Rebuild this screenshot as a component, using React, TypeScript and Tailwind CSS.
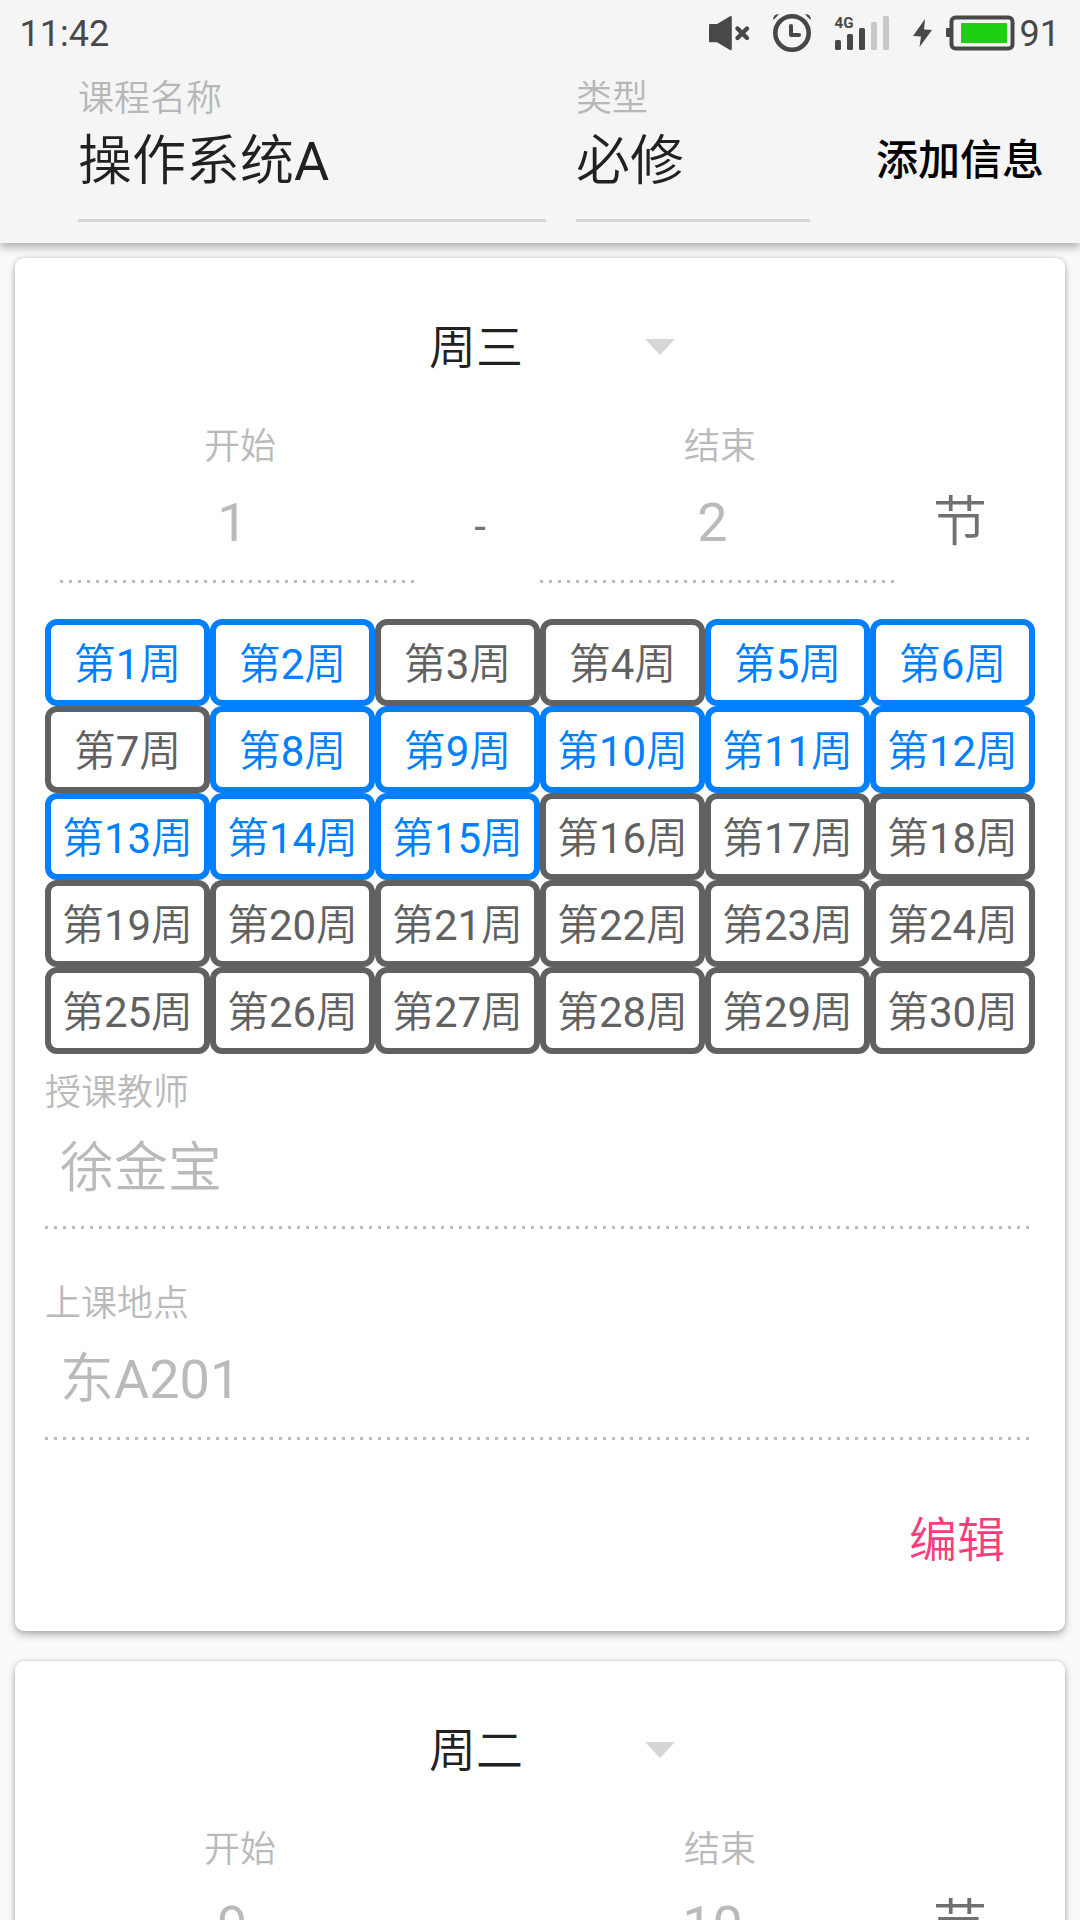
type Session = { day: string; start: string; end: string; weeks: number[]; teacher: string; place: string };

const sessions: Session[] = [
  { day: '周三', start: '1', end: '2', weeks: [1, 2, 5, 6, 8, 9, 10, 11, 12, 13, 14, 15], teacher: '徐金宝', place: '东A201' },
  { day: '周二', start: '9', end: '10', weeks: [1, 2, 5, 6, 8, 9, 10, 11, 12, 13, 14, 15], teacher: '徐金宝', place: '东A201' },
];

const allWeeks = Array.from({ length: 30 }, (_, i) => i + 1);

function StatusBar() {
  return (
    <div className="flex h-[68px] items-center pl-[19.500px] text-[36px] leading-[42px] text-[#484848]">
      <span>11:42</span>
      <svg className="ml-auto h-[68px] w-[312px] shrink-0" viewBox="704 0 312 68" fill="#484848">
        <path d="M710 24h7l13-7.700q1.800-.8 1.800.8v32q0 1.600-1.800.8L717 42.200h-7q-1 0-1-1V25q0-1 1-1z" />
        <path d="M737.500 28.500l9.500 9.500M747 28.500L737.500 38" stroke="#484848" strokeWidth="4.400" strokeLinecap="round" />
        <circle cx="792" cy="33" r="16.700" fill="none" stroke="#484848" strokeWidth="4.600" />
        <path d="M791 26v9h8" fill="none" stroke="#484848" strokeWidth="4" strokeLinecap="round" strokeLinejoin="round" />
        <path d="M773 20q0-6 6-6q-2 3-6 6zM811 20q0-6-6-6q2 3 6 6z" />
        <text x="834.500" y="28" fontSize="15.500" fontWeight="700" fontFamily="Roboto, sans-serif" textLength="19" lengthAdjust="spacingAndGlyphs">4G</text>
        <rect x="835" y="40" width="6" height="10" rx="1.500" />
        <rect x="847" y="34" width="6" height="16" rx="1.500" />
        <rect x="859" y="28" width="6" height="22" rx="1.500" />
        <rect x="871" y="22" width="6" height="28" rx="1.500" fill="#c8c8c8" />
        <rect x="883" y="16" width="6" height="34" rx="1.500" fill="#c8c8c8" />
        <path d="M925 19l-12 17 8 .5-1.500 10.500L932 30l-8-.5z" />
        <rect x="951.500" y="17.500" width="61" height="31" rx="4" fill="none" stroke="#484848" strokeWidth="4" />
        <path d="M950 28h-3q-1 0-1 1v7q0 1 1 1h3z" />
        <rect x="961" y="23" width="46" height="20" rx="1" fill="#1fcf12" />
      </svg>
      <span className="flex w-[64px] pl-[3.500px]">91</span>
    </div>
  );
}

function HeaderField({ label, value, width }: { label: string; value: string; width: string }) {
  return (
    <div className={width}>
      <div className="mt-[10px] text-[36px] leading-[42px] text-[#b7b7b7]">{label}</div>
      <div className="mt-[10px] text-[54px] leading-[63px] text-[#212121]">{value}</div>
      <div className="mt-[26px] h-[3px] bg-[#d6d6d6]" />
    </div>
  );
}

function Dots() {
  return <div className="h-[3px] bg-[repeating-linear-gradient(90deg,#bbbbbb_0_3px,transparent_3px_9px)]" />;
}

function PeriodField({ label, value }: { label: string; value: string }) {
  return (
    <div className="w-[360px] text-center text-[#bababa]">
      <div className="text-[36px] leading-[42px]">{label}</div>
      <div className="mt-[25px] pr-[15px] text-[54px] leading-[60px]">{value}</div>
      <div className="mt-[27px] w-[354px]">
        <Dots />
      </div>
    </div>
  );
}

function InfoField({ label, value }: { label: string; value: string }) {
  return (
    <div className="text-[#bababa]">
      <div className="text-[36px] leading-[42px]">{label}</div>
      <div className="mt-[25px] pl-[15px] text-[54px] leading-[60px]">{value}</div>
      <div className="mt-[27px] w-[984px]">
        <Dots />
      </div>
    </div>
  );
}

function SessionCard({ session }: { session: Session }) {
  return (
    <section className="h-[1373px] shrink-0 rounded-[9px] bg-white px-[30px] pt-[60px] shadow-[0_4px_8px_rgba(0,0,0,0.28),0_0_4px_rgba(0,0,0,0.14)]">
      <div className="flex h-[60px] items-center pl-[384px]">
        <span className="w-[216px] text-[47px] leading-[60px] text-[#212121]">{session.day}</span>
        <svg className="mb-[2px] h-[16px] w-[30px]" viewBox="0 0 30 16">
          <path d="M0 0h30L15 16z" fill="#d6d6d6" />
        </svg>
      </div>
      <div className="mt-[48px] flex pl-[15px]">
        <PeriodField label="开始" value={session.start} />
        <div className="w-[120px] pt-[80px] text-center text-[42px] leading-[42px] text-[#757575]">-</div>
        <PeriodField label="结束" value={session.end} />
        <div className="w-[120px] pt-[67px] text-center text-[54px] leading-[60px] text-[#707070]">节</div>
      </div>
      <div className="mt-[36px] grid grid-cols-6">
        {allWeeks.map((n) => (
          <div
            key={n}
            className={
              'h-[87px] rounded-[12px] border-[6px] pt-[2px] text-center text-[42px] leading-[75px] ' +
              (session.weeks.includes(n) ? 'border-[#007fff] text-[#007fff]' : 'border-[#616161] text-[#616161]')
            }
          >
            第{n}周
          </div>
        ))}
      </div>
      <div className="mt-[18px] flex flex-col gap-[54px]">
        <InfoField label="授课教师" value={session.teacher} />
        <InfoField label="上课地点" value={session.place} />
      </div>
      <div className="mt-[71px] flex justify-end pr-[30px] text-[48px] leading-[60px] text-[#f83d7c]">
        <button>编辑</button>
      </div>
    </section>
  );
}

export default function App() {
  return (
    <div className="flex h-[1920px] w-[1080px] flex-col overflow-hidden bg-[#fafafa] font-[Roboto,'Noto_Sans_CJK_SC_DemiLight','Noto_Sans_CJK_SC_Light','Noto_Sans_CJK_SC',sans-serif]">
      <header className="z-10 h-[243px] shrink-0 bg-[#f5f5f5] shadow-[0_4px_9px_rgba(0,0,0,0.32)]">
        <StatusBar />
        <div className="flex pl-[78px]">
          <HeaderField label="课程名称" value="操作系统A" width="w-[468px]" />
          <div className="ml-[30px]">
            <HeaderField label="类型" value="必修" width="w-[234px]" />
          </div>
          <button className="mt-[63px] ml-[66px] h-[60px] font-[Roboto,'Noto_Sans_CJK_SC',sans-serif] text-[42px] leading-[60px] font-medium text-black">添加信息</button>
        </div>
      </header>
      <main className="mt-[15px] flex flex-col gap-[30px] px-[15px]">
        {sessions.map((s) => (
          <SessionCard key={s.day} session={s} />
        ))}
      </main>
    </div>
  );
}
